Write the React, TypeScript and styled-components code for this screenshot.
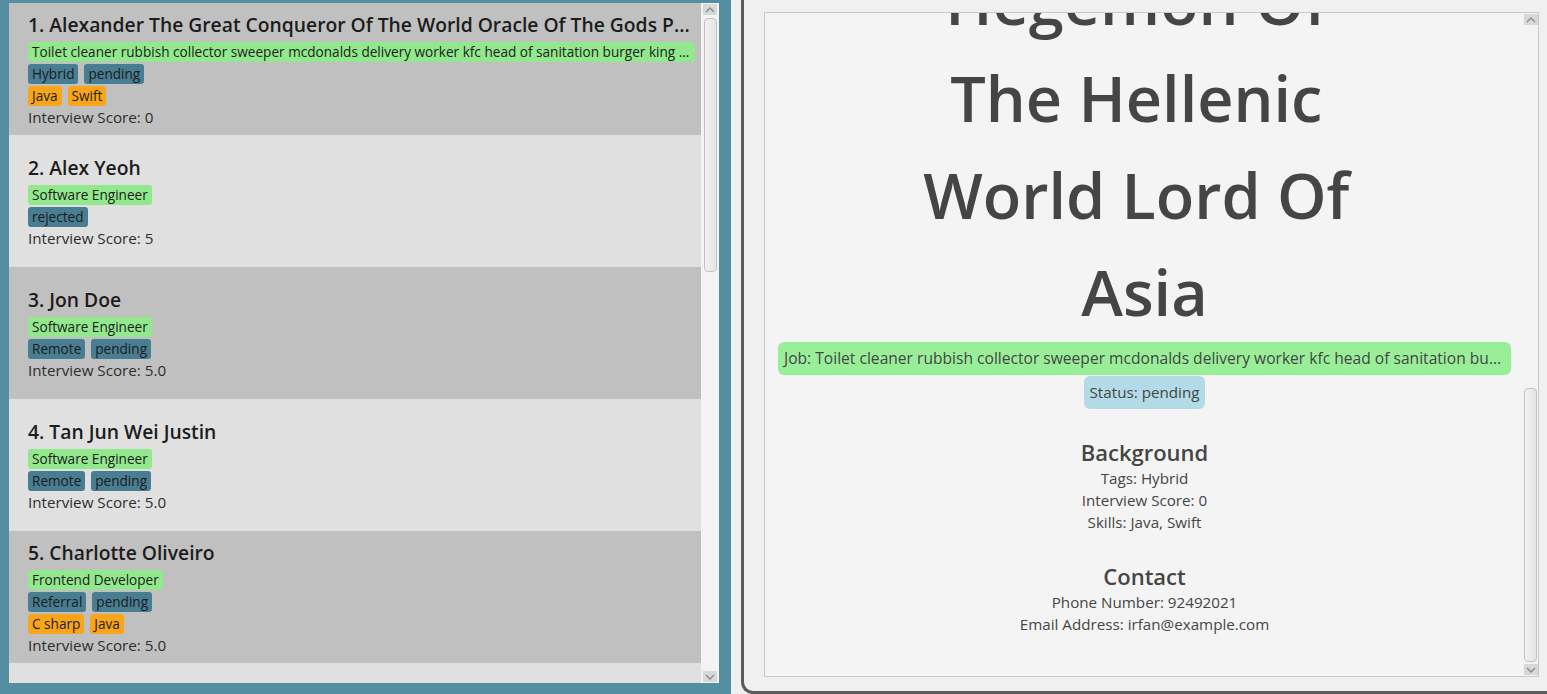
import React from "react";
import styled, { createGlobalStyle } from "styled-components";

const GlobalStyle = createGlobalStyle`
  html, body { margin: 0; padding: 0; overflow: hidden; }
  body { font-family: "Open Sans", "Noto Sans", sans-serif; }
  * { box-sizing: border-box; }
`;

const FONT = `"Open Sans", "Noto Sans", sans-serif`;

const Root = styled.div`
  display: flex;
  width: 1547px;
  height: 694px;
  overflow: hidden;
  font-family: ${FONT};
`;

const LeftPane = styled.div`
  flex: none;
  width: 731px;
  height: 100%;
  background: #548fa1;
  padding: 3px 12px 11px 9px;
  display: flex;
`;

const ListView = styled.div`
  flex: 1;
  min-width: 0;
  display: flex;
  background: #f3f3f3;
  overflow: hidden;
`;

const Cards = styled.div`
  flex: 1;
  min-width: 0;
  display: flex;
  flex-direction: column;
  overflow: hidden;
`;

const Card = styled.div<{ $dark: boolean }>`
  flex: none;
  height: 132px;
  background: ${(p) => (p.$dark ? "#c0c0c0" : "#e0e0e0")};
  padding: 0 6px 0 19px;
  display: flex;
  flex-direction: column;
  justify-content: center;
  align-items: flex-start;
  min-width: 0;
`;

const Name = styled.div`
  width: 100%;
  font-size: 19.3px;
  font-weight: 600;
  color: #1c1c1c;
  line-height: 28px;
  margin-bottom: 3px;
  white-space: nowrap;
  overflow: hidden;
  text-overflow: ellipsis;
`;

const TagBlock = styled.div`
  display: flex;
  flex-direction: column;
  align-items: flex-start;
  gap: 2px;
  max-width: 100%;
`;

const TagRow = styled.div`
  display: flex;
  gap: 6px;
  max-width: 100%;
`;

const Tag = styled.span<{ $kind: "job" | "tag" | "skill" }>`
  display: inline-block;
  height: 20px;
  line-height: 20px;
  padding: 0 4px;
  border-radius: 3px;
  font-size: 13.6px;
  color: #1c1c1c;
  white-space: nowrap;
  overflow: hidden;
  text-overflow: ellipsis;
  max-width: 100%;
  background: ${(p) =>
    p.$kind === "job" ? "#92e98d" : p.$kind === "tag" ? "#487d92" : "#f9a51a"};
`;

const Score = styled.div`
  font-size: 15.2px;
  line-height: 22px;
  color: #2e2e2e;
`;

const ScrollTrack = styled.div<{ $w: number }>`
  flex: none;
  width: ${(p) => p.$w}px;
  background: #f3f3f3;
  display: flex;
  flex-direction: column;
  align-items: center;
  padding: 1px 0;
`;

const ArrowBox = styled.div`
  flex: none;
  width: 14px;
  height: 11px;
  background: #d8d8d8;
  display: flex;
  align-items: center;
  justify-content: center;
`;

const Spacer = styled.div`
  flex: 1;
`;

const Thumb = styled.div<{ $h: number; $mt: number; $mb: number }>`
  flex: none;
  width: 13px;
  height: ${(p) => p.$h}px;
  margin-top: ${(p) => p.$mt}px;
  margin-bottom: ${(p) => p.$mb}px;
  border: 1px solid #c2c2c2;
  border-radius: 4px;
  background: linear-gradient(to right, #f2f2f2, #e4e4e4);
`;

const RightArea = styled.div`
  flex: 1;
  min-width: 0;
  height: 100%;
  background: #f0f0f0;
  padding-left: 10px;
  display: flex;
  overflow: hidden;
`;

const Panel = styled.div`
  flex: 1;
  min-width: 0;
  margin-top: -12px;
  height: 706px;
  border: 3px solid #5b5b5b;
  border-right: none;
  border-radius: 12px 0 0 12px;
  padding: 21px 8px 14px 20px;
  display: flex;
`;

const DetailBox = styled.div`
  flex: 1;
  min-width: 0;
  display: flex;
  border: 1px solid #c9c9c9;
  background: #f4f4f4;
  overflow: hidden;
`;

const DetailContent = styled.div`
  flex: 1;
  min-width: 0;
  display: flex;
  flex-direction: column;
  align-items: center;
  padding: 0 12px 0 13px;
  overflow: hidden;
  color: #454545;
`;

const Title = styled.div`
  flex: none;
  margin-top: -61px;
  font-size: 63px;
  font-weight: 600;
  line-height: 97px;
  text-align: center;
  white-space: pre;
`;

const TitleLine = styled.div``;

const JobBar = styled.div`
  flex: none;
  align-self: stretch;
  margin-top: 2px;
  height: 33px;
  line-height: 33px;
  padding: 0 6px;
  border-radius: 6px;
  background: #99ef99;
  font-size: 15.6px;
  white-space: nowrap;
  overflow: hidden;
  text-overflow: ellipsis;
`;

const StatusBar = styled.div`
  flex: none;
  margin-top: 1px;
  height: 33px;
  line-height: 33px;
  padding: 0 6px;
  border-radius: 6px;
  background: #b3dbe7;
  font-size: 15.2px;
`;

const Section = styled.div`
  flex: none;
  margin-top: 28px;
  display: flex;
  flex-direction: column;
  align-items: center;
`;

const SectionTitle = styled.div`
  font-size: 22px;
  font-weight: 600;
  line-height: 30px;
`;

const SectionLine = styled.div`
  font-size: 15.2px;
  line-height: 22px;
`;

const Chevron = ({ up }: { up: boolean }) => (
  <svg width="10" height="6" viewBox="0 0 10 6">
    <polyline
      points={up ? "1,5 5,1 9,5" : "1,1 5,5 9,1"}
      fill="none"
      stroke="#8a8a8a"
      strokeWidth="1.3"
    />
  </svg>
);

type Person = {
  name: string;
  job: string;
  tags: string[];
  skills: string[];
  score: string;
};

const people: Person[] = [
  {
    name:
      "1. Alexander The Great Conqueror Of The World Oracle Of The Gods Pharaoh Of Egypt Hegemon Of The Hellenic World Lord Of Asia",
    job:
      "Toilet cleaner rubbish collector sweeper mcdonalds delivery worker kfc head of sanitation burger king fries cook",
    tags: ["Hybrid", "pending"],
    skills: ["Java", "Swift"],
    score: "0",
  },
  { name: "2. Alex Yeoh", job: "Software Engineer", tags: ["rejected"], skills: [], score: "5" },
  { name: "3. Jon Doe", job: "Software Engineer", tags: ["Remote", "pending"], skills: [], score: "5.0" },
  {
    name: "4. Tan Jun Wei Justin",
    job: "Software Engineer",
    tags: ["Remote", "pending"],
    skills: [],
    score: "5.0",
  },
  {
    name: "5. Charlotte Oliveiro",
    job: "Frontend Developer",
    tags: ["Referral", "pending"],
    skills: ["C sharp", "Java"],
    score: "5.0",
  },
  { name: "6. David Li", job: "Backend Developer", tags: ["Remote", "pending"], skills: [], score: "5.0" },
];

const titleLines = ["Hegemon Of ", "The Hellenic ", "World Lord Of ", "Asia"];

export default function App() {
  return (
    <Root>
      <GlobalStyle />
      <LeftPane>
        <ListView>
          <Cards>
            {people.map((p, i) => (
              <Card key={i} $dark={i % 2 === 0}>
                <Name>{p.name}</Name>
                <TagBlock>
                  <TagRow>
                    <Tag $kind="job">{p.job}</Tag>
                  </TagRow>
                  {p.tags.length > 0 && (
                    <TagRow>
                      {p.tags.map((t) => (
                        <Tag key={t} $kind="tag">
                          {t}
                        </Tag>
                      ))}
                    </TagRow>
                  )}
                  {p.skills.length > 0 && (
                    <TagRow>
                      {p.skills.map((t) => (
                        <Tag key={t} $kind="skill">
                          {t}
                        </Tag>
                      ))}
                    </TagRow>
                  )}
                </TagBlock>
                <Score>Interview Score: {p.score}</Score>
              </Card>
            ))}
          </Cards>
          <ScrollTrack $w={18}>
            <ArrowBox>
              <Chevron up />
            </ArrowBox>
            <Thumb $h={254} $mt={3} $mb={0} />
            <Spacer />
            <ArrowBox>
              <Chevron up={false} />
            </ArrowBox>
          </ScrollTrack>
        </ListView>
      </LeftPane>
      <RightArea>
        <Panel>
          <DetailBox>
            <DetailContent>
              <Title>
                {titleLines.map((l) => (
                  <TitleLine key={l}>{l}</TitleLine>
                ))}
              </Title>
              <JobBar>
                Job: Toilet cleaner rubbish collector sweeper mcdonalds delivery worker kfc head of
                sanitation burger king fries cook
              </JobBar>
              <StatusBar>Status: pending</StatusBar>
              <Section>
                <SectionTitle>Background</SectionTitle>
                <SectionLine>Tags: Hybrid</SectionLine>
                <SectionLine>Interview Score: 0</SectionLine>
                <SectionLine>Skills: Java, Swift</SectionLine>
              </Section>
              <Section>
                <SectionTitle>Contact</SectionTitle>
                <SectionLine>Phone Number: 92492021</SectionLine>
                <SectionLine>Email Address: irfan@example.com</SectionLine>
              </Section>
            </DetailContent>
            <ScrollTrack $w={15}>
              <ArrowBox>
                <Chevron up />
              </ArrowBox>
              <Spacer />
              <Thumb $h={274} $mt={0} $mb={2} />
              <ArrowBox>
                <Chevron up={false} />
              </ArrowBox>
            </ScrollTrack>
          </DetailBox>
        </Panel>
      </RightArea>
    </Root>
  );
}
